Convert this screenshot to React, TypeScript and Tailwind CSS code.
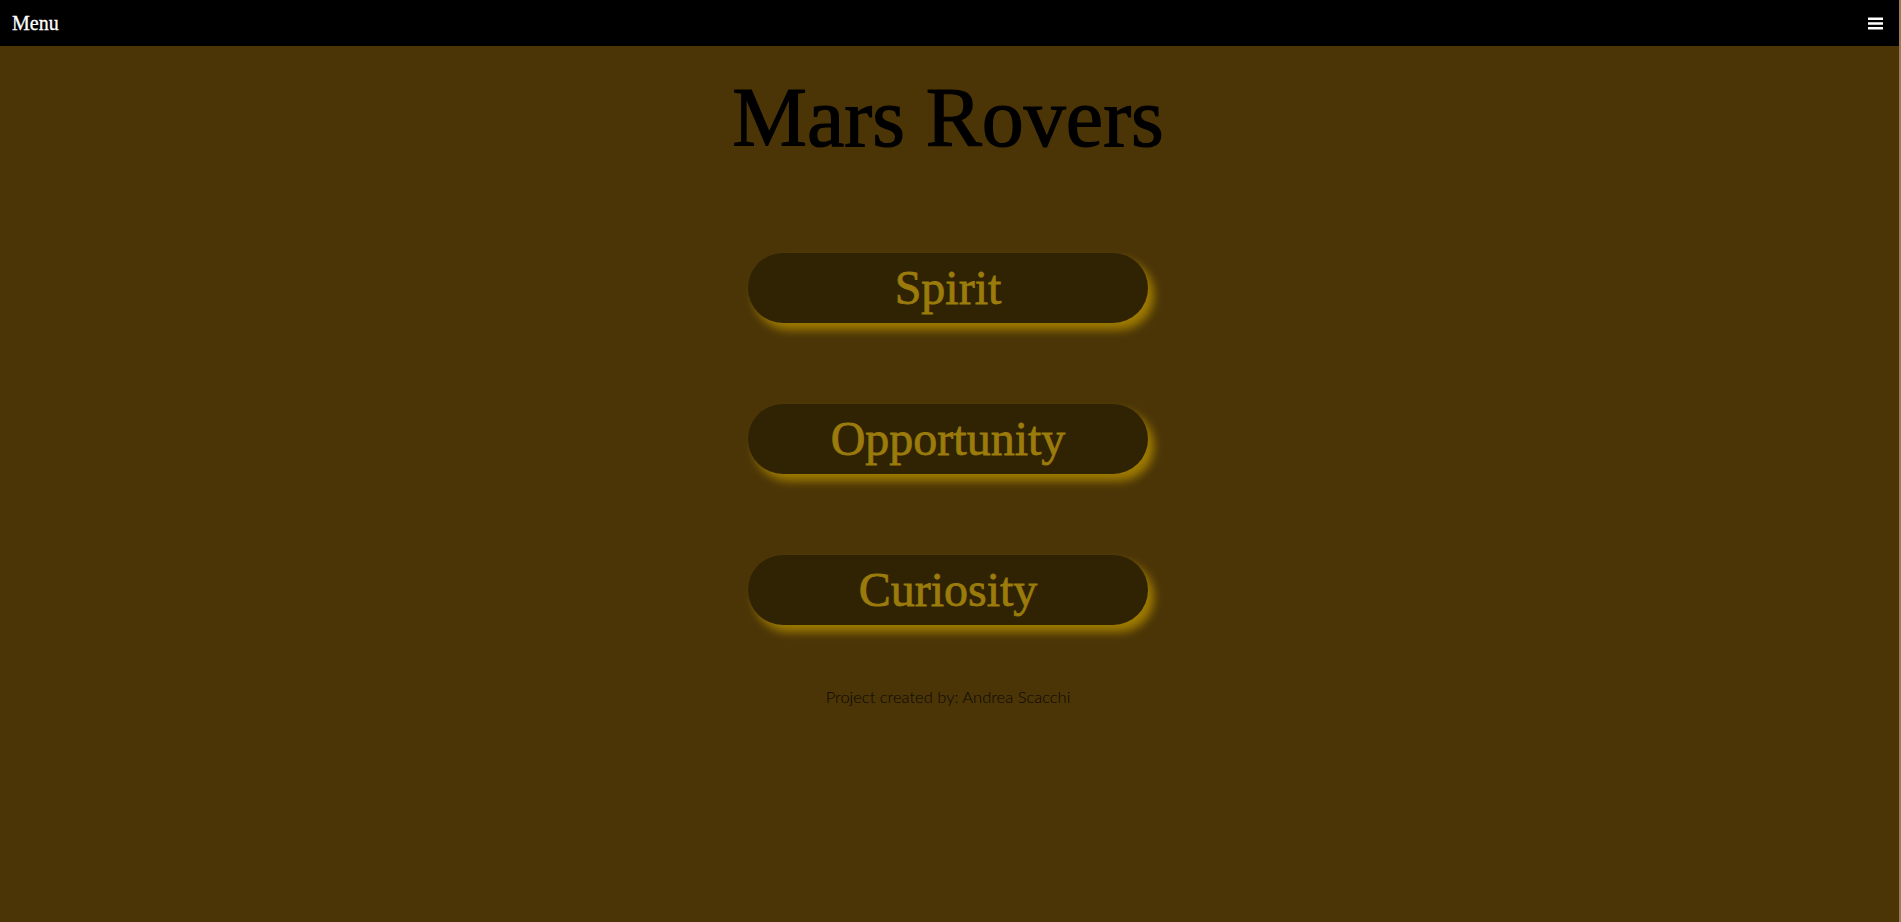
const rovers = ['Spirit', 'Opportunity', 'Curiosity']

const App = () => {
  return (
    <div className="min-h-screen bg-[#9a7b55] pr-[2px] flex" style={{ fontFamily: '"Liberation Serif", serif' }}>
      <div className="flex-1 bg-[#4b3507] flex flex-col">
        <nav className="h-[46px] bg-black flex items-center justify-between pl-3 pr-4">
          <span className="text-white text-[20px] leading-none [-webkit-text-stroke:0.3px_white]">Menu</span>
          <svg width="15" height="13" viewBox="0 0 15 13" className="text-white">
            <rect x="0" y="0.5" width="15" height="2.5" fill="currentColor" />
            <rect x="0" y="5.25" width="15" height="2.5" fill="currentColor" />
            <rect x="0" y="10" width="15" height="2.5" fill="currentColor" />
          </svg>
        </nav>
        <main className="flex flex-col items-center pr-[3px]">
          <h1 className="mt-[21px] text-[84px] leading-[101px] text-black [-webkit-text-stroke:1.2px_black]">Mars Rovers</h1>
          <div className="mt-[85px] flex flex-col gap-[81px]">
            {rovers.map((r) => (
              <button
                key={r}
                className="w-[400px] h-[70px] rounded-full bg-[#302304] text-[#9b7b0b] text-[48px] leading-none shadow-[6px_7px_10px_#a07c00] [-webkit-text-stroke:0.8px_#9b7b0b]"
              >
                {r}
              </button>
            ))}
          </div>
          <p className="mt-[60px] text-[16.5px] leading-6 text-[#0a0700]" style={{ fontFamily: 'Lato, sans-serif', fontWeight: 300 }}>
            Project created by: Andrea Scacchi
          </p>
        </main>
      </div>
    </div>
  )
}

export default App
